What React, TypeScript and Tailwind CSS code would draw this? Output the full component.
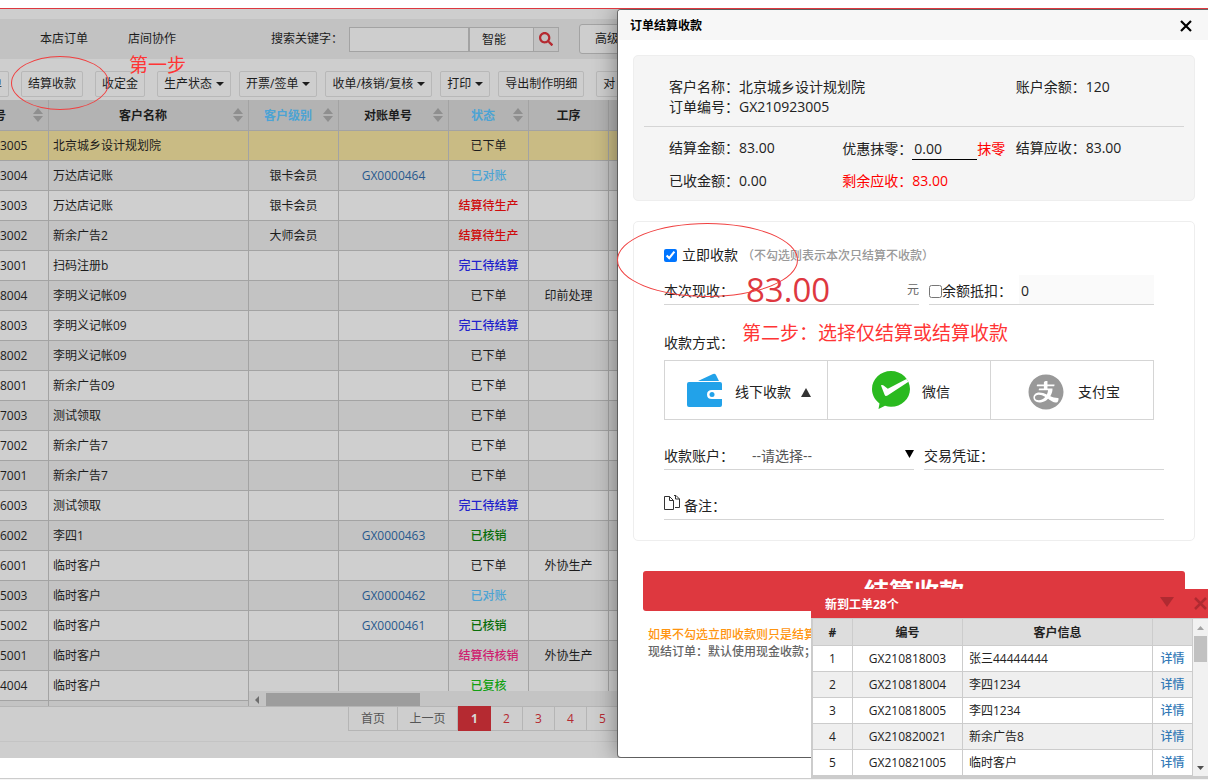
import type { ReactNode } from 'react';
import clsx from 'clsx';
import { FaSearch } from 'react-icons/fa';
import { AiFillAlipayCircle } from 'react-icons/ai';

type Order = {
  id: string;
  name: string;
  level?: string;
  bill?: string;
  status: string;
  step?: string;
};

const ORDERS: Order[] = [
  { id: '3005', name: '北京城乡设计规划院', status: '已下单' },
  { id: '3004', name: '万达店记账', level: '银卡会员', bill: 'GX0000464', status: '已对账' },
  { id: '3003', name: '万达店记账', level: '银卡会员', status: '结算待生产' },
  { id: '3002', name: '新余广告2', level: '大师会员', status: '结算待生产' },
  { id: '3001', name: '扫码注册b', status: '完工待结算' },
  { id: '8004', name: '李明义记帐09', status: '已下单', step: '印前处理' },
  { id: '8003', name: '李明义记帐09', status: '完工待结算' },
  { id: '8002', name: '李明义记帐09', status: '已下单' },
  { id: '8001', name: '新余广告09', status: '已下单' },
  { id: '7003', name: '测试领取', status: '已下单' },
  { id: '7002', name: '新余广告7', status: '已下单' },
  { id: '7001', name: '新余广告7', status: '已下单' },
  { id: '6003', name: '测试领取', status: '完工待结算' },
  { id: '6002', name: '李四1', bill: 'GX0000463', status: '已核销' },
  { id: '6001', name: '临时客户', status: '已下单', step: '外协生产' },
  { id: '5003', name: '临时客户', bill: 'GX0000462', status: '已对账' },
  { id: '5002', name: '临时客户', bill: 'GX0000461', status: '已核销' },
  { id: '5001', name: '临时客户', status: '结算待核销', step: '外协生产' },
  { id: '4004', name: '临时客户', status: '已复核' },
];

const STATUS_COLORS: Record<string, string> = {
  已下单: 'text-[#1c1c1c]',
  已对账: 'font-medium text-[#4da3d4]',
  结算待生产: 'font-medium text-[#cf0d0d]',
  完工待结算: 'font-medium text-[#2222cc]',
  已核销: 'font-medium text-[#0a6e0a]',
  结算待核销: 'font-medium text-[#cf2270]',
  已复核: 'font-medium text-[#13a013]',
};

const TICKETS = [
  { no: 'GX210818003', customer: '张三44444444' },
  { no: 'GX210818004', customer: '李四1234' },
  { no: 'GX210818005', customer: '李四1234' },
  { no: 'GX210820021', customer: '新余广告8' },
  { no: 'GX210821005', customer: '临时客户' },
];

const TOOLS = [
  { label: '单' },
  { label: '结算收款' },
  { label: '收定金' },
  { label: '生产状态', menu: true },
  { label: '开票/签单', menu: true },
  { label: '收单/核销/复核', menu: true },
  { label: '打印', menu: true },
  { label: '导出制作明细' },
  { label: '对' },
];

function Caret() {
  return (
    <svg viewBox="0 0 8 4" className="ml-1 h-1 w-2 shrink-0 fill-current">
      <path d="M0 0h8L4 4z" />
    </svg>
  );
}

function SortIcon() {
  return (
    <svg viewBox="0 0 10 14" className="h-3.5 w-2.5 shrink-0 fill-[#8f8f8f]">
      <path d="M5 0l5 6H0zM0 8h10l-5 6z" />
    </svg>
  );
}

function HeadCell({ children, sort = true, blue }: { children?: ReactNode; sort?: boolean; blue?: boolean }) {
  return (
    <th className="h-[31px] border-r border-b border-[#a3a3a3] bg-[#b3b3b3] p-0 font-bold">
      <div className={clsx('flex items-center', sort && 'pr-[5px] pl-1', blue && 'text-[#4da3d4]')}>
        <span className="flex-1 pt-0.5 text-center">{children}</span>
        {sort && <SortIcon />}
      </div>
    </th>
  );
}

function Cell({ children, className }: { children?: ReactNode; className?: string }) {
  return (
    <td className={clsx('h-[30px] border-r border-b border-[#a3a3a3] p-0 whitespace-nowrap', className)}>
      {children}
    </td>
  );
}

function rowColor(i: number) {
  if (i === 0) return 'bg-[#c9bb84]';
  return i % 2 ? 'bg-[#c3c3c3]' : 'bg-[#cfcfcf]';
}

function OrderTables() {
  return (
    <div className="flex min-h-0 flex-1 overflow-hidden border-b border-[#b5b5b5]">
      {/* frozen columns */}
      <div className="w-[249px] shrink-0 overflow-hidden">
        <table className="w-full table-fixed border-separate border-spacing-0">
          <colgroup>
            <col className="w-[49px]" />
            <col />
          </colgroup>
          <thead>
            <tr>
              <th className="h-[31px] border-r border-b border-[#a3a3a3] bg-[#b3b3b3] p-0 font-bold">
                <div className="-ml-1.5 flex items-center justify-between pr-[5px]">
                  <span className="pt-0.5">号</span>
                  <SortIcon />
                </div>
              </th>
              <HeadCell>客户名称</HeadCell>
            </tr>
          </thead>
          <tbody>
            {ORDERS.map((o, i) => (
              <tr key={o.id} className={rowColor(i)}>
                <Cell>{o.id}</Cell>
                <Cell className="pl-1">{o.name}</Cell>
              </tr>
            ))}
            <tr className="bg-[#c3c3c3]">
              <Cell />
              <Cell />
            </tr>
          </tbody>
        </table>
      </div>

      {/* scrolling columns */}
      <div className="flex min-w-0 flex-1 flex-col">
        <div className="min-h-0 flex-1 overflow-hidden">
          <table className="w-full table-fixed border-separate border-spacing-0 text-center">
            <colgroup>
              <col className="w-[90px]" />
              <col className="w-[110px]" />
              <col className="w-[80px]" />
              <col className="w-[80px]" />
              <col />
            </colgroup>
            <thead>
              <tr>
                <HeadCell blue>客户级别</HeadCell>
                <HeadCell>对账单号</HeadCell>
                <HeadCell blue>状态</HeadCell>
                <HeadCell sort={false}>工序</HeadCell>
                <HeadCell sort={false} />
              </tr>
            </thead>
            <tbody>
              {ORDERS.map((o, i) => (
                <tr key={o.id} className={rowColor(i)}>
                  <Cell>{o.level}</Cell>
                  <Cell>
                    {o.bill && (
                      <a href="#" className="text-[#29598c]">
                        {o.bill}
                      </a>
                    )}
                  </Cell>
                  <Cell className={STATUS_COLORS[o.status]}>{o.status}</Cell>
                  <Cell>{o.step}</Cell>
                  <Cell />
                </tr>
              ))}
            </tbody>
          </table>
        </div>
        <div className="flex h-[15px] shrink-0 items-end bg-[#c4c4c4]">
          <svg viewBox="0 0 17 15" className="h-[15px] w-[17px] fill-[#6e6e6e]">
            <path d="M10 5v8L6 9z" />
          </svg>
          <div className="h-[13px] w-[154px] bg-[#9d9d9d]" />
        </div>
      </div>
    </div>
  );
}

function Pager() {
  const item = 'h-6 border-r border-b border-[#b5b5b5] leading-6';
  return (
    <div className="h-[51px] shrink-0">
      <nav className="flex h-[35px] border-b border-[#c4c4c4] pl-[348px] text-[#b52a31]">
        <button className={clsx(item, 'w-[50px] border-l text-[#555]')}>首页</button>
        <button className={clsx(item, 'w-[60px] text-[#555]')}>上一页</button>
        <button className="-mt-px h-[25px] w-[33px] bg-[#b52a31] font-bold text-[#d8d8d8]">1</button>
        {['2', '3', '4', '5'].map((n) => (
          <button key={n} className={clsx(item, 'w-8 font-medium')}>
            {n}
          </button>
        ))}
      </nav>
    </div>
  );
}

function OrdersPage() {
  return (
    <div className="flex h-full flex-col bg-[#cecece] pt-2.5 text-xs text-[#1c1c1c]">
      <div className="flex h-10 shrink-0 items-center bg-[#c2c2c2] pl-10">
        <a href="#" className="w-[88px]">
          本店订单
        </a>
        <a href="#" className="w-[143px]">
          店间协作
        </a>
        <label htmlFor="keyword" className="w-[78px]">
          搜索关键字：
        </label>
        <input id="keyword" className="h-[25px] w-[120px] border border-[#a3a3a3] bg-[#cecece] px-1 outline-none" />
        <select
          aria-label="搜索方式"
          className="h-[25px] w-16 appearance-none border-y border-l border-[#a3a3a3] bg-[#cecece] pt-0.5 pl-3 outline-none"
        >
          <option>智能</option>
        </select>
        <button aria-label="搜索" className="flex h-[25px] w-[26px] items-center justify-center border border-[#a3a3a3]">
          <FaSearch className="size-3.5 text-[#b52a31]" />
        </button>
        <button className="ml-5 h-[30px] rounded-[3px] border border-[#a3a3a3] bg-[#cecece] px-[15px]">高级</button>
      </div>

      <div className="-ml-[17px] flex h-[41px] shrink-0 items-start pt-3">
        {TOOLS.map((tool) => (
          <button
            key={tool.label}
            className={clsx(
              'flex h-[26px] shrink-0 items-center rounded-xs border border-[#b8b8b8] px-1.5',
              tool.menu ? 'mr-2' : 'mr-3',
            )}
          >
            {tool.label}
            {tool.menu && <Caret />}
          </button>
        ))}
      </div>

      <OrderTables />
      <Pager />
    </div>
  );
}

function WalletIcon() {
  return (
    <svg viewBox="0 0 35 34" className="h-[34px] w-[35px] fill-[#22a2e9]">
      <path d="M11 8L26 1q2-1 3 1l3 6z" />
      <path d="M2 9h31q2 0 2 2v6h-10q-5 0-5 4.500t5 4.500h10v6q0 2-2 2H2q-2 0-2-2V11q0-2 2-2z" />
      <circle cx="25" cy="21.500" r="2.500" />
    </svg>
  );
}

function WechatPayIcon() {
  return (
    <svg viewBox="0 0 38 38" className="size-[38px]">
      <path
        d="M19 0C8.500 0 0 8 0 18c0 6 3 11 7.500 14.500L6.500 38l6.500-3.200c2 .7 4 1 6 1 10.500 0 19-8 19-17.800S29.500 0 19 0z"
        fill="#2aba1f"
      />
      <path d="M9 14.500c.8-.8 2-.4 2.600 0l4.200 3.300L34.500 8l2 2.800L15.500 24.500c-1.200.8-2.300.7-2.900-.8z" fill="#fff" />
    </svg>
  );
}

function CopyIcon() {
  return (
    <svg viewBox="0 0 16 16" className="mb-1 size-4 shrink-0" fill="none" stroke="#333">
      <path d="M.5 1.500h5l4 4v9H.5zM5.500 1.500v4h4" />
      <path d="M10 .5h2l3.500 3.500v8.500H11M11.500 .5v3.500h4" />
    </svg>
  );
}

function Field({ label, children, className }: { label: string; children: ReactNode; className?: string }) {
  return (
    <div className={className}>
      {label}：{children}
    </div>
  );
}

function SettleDialog() {
  const line = 'flex h-[30px] items-center border-b border-[#d5d5d5]';
  return (
    <section
      role="dialog"
      aria-label="订单结算收款"
      className="absolute inset-y-px right-0 w-[590px] rounded-l-[3px] bg-white text-sm text-[#222] shadow-[0_0_24px_rgba(0,0,0,0.45),0_0_0_1px_#777]"
    >
      <header className="flex h-[30px] items-center justify-between rounded-tl-[3px] bg-[#f7f7f7] pr-4 pl-3">
        <h2 className="pt-0.5 text-xs font-bold text-black">订单结算收款</h2>
        <button aria-label="关闭" className="pt-0.5">
          <svg viewBox="0 0 12 12" className="size-3" stroke="#000" strokeWidth="2.200">
            <path d="M1 1l10 10M11 1L1 11" />
          </svg>
        </button>
      </header>

      <div className="pt-[15px] pr-[13px] pl-[15px]">
        <div className="rounded-[5px] border border-[#eee] bg-[#f5f5f5] pt-[21px] pb-[3px]">
          <div className="grid grid-cols-3 pr-[5px] pl-[35px] leading-5">
            <Field label="客户名称" className="col-span-2">
              北京城乡设计规划院
            </Field>
            <Field label="账户余额">120</Field>
            <Field label="订单编号">GX210923005</Field>
          </div>
          <hr className="mx-2.5 mt-[9px] mb-1 border-[#d5d5d5]" />
          <div className="grid grid-cols-3 pr-[5px] pl-[35px] leading-[33px]">
            <Field label="结算金额">83.00</Field>
            <div className="flex h-[33px] items-center pt-0.5 whitespace-nowrap">
              <label htmlFor="discount">优惠抹零：</label>
              <input
                id="discount"
                defaultValue="0.00"
                className="h-[22px] w-[65px] border-b border-black pl-0.5 outline-none"
              />
              <button className="text-[#f00]">抹零</button>
            </div>
            <Field label="结算应收">83.00</Field>
            <Field label="已收金额">0.00</Field>
            <Field label="剩余应收" className="text-[#f00]">
              83.00
            </Field>
          </div>
        </div>

        <div className="mt-5 rounded-[5px] border border-[#eee] px-[30px] pt-[23px] pb-5">
          <div className="flex h-5 items-center gap-1">
            <label className="flex items-center gap-[5px]">
              <input type="checkbox" defaultChecked className="size-[13px]" />
              立即收款
            </label>
            <span className="pt-0.5 text-xs font-medium text-[#999]">（不勾选则表示本次只结算不收款）</span>
          </div>

          <div className="mt-2.5 flex gap-2.5">
            <div className={clsx(line, 'w-[255px]')}>
              <label htmlFor="cash" className="w-[82px] shrink-0 pt-0.5">
                本次现收：
              </label>
              <input
                id="cash"
                defaultValue="83.00"
                className="h-[29px] min-w-0 flex-1 text-[33px] leading-[29px] text-[#de383f] outline-none"
              />
              <span className="text-xs text-[#666]">元</span>
            </div>
            <div className={clsx(line, 'w-[225px]')}>
              <input id="use-balance" type="checkbox" className="mt-1 size-[13px]" />
              <label htmlFor="use-balance" className="w-[77px] pt-0.5">
                余额抵扣：
              </label>
              <input
                aria-label="余额抵扣"
                defaultValue="0"
                className="h-[29px] min-w-0 flex-1 bg-[#fafafa] pt-0.5 pl-0.5 outline-none"
              />
            </div>
          </div>

          <div className="mt-7 h-5 leading-5">收款方式：</div>
          <div className="mt-[7px] mr-2.5 grid h-15 grid-cols-[163px_163px_1fr] divide-x divide-[#d5d5d5] border border-[#d5d5d5]">
            <button className="flex items-center pl-[22px]">
              <WalletIcon />
              <span className="ml-[13px] pt-1">线下收款</span>
              <svg viewBox="0 0 10 9" className="mt-1 ml-2.5 h-[9px] w-2.5 fill-[#333]">
                <path d="M5 0l5 9H0z" />
              </svg>
            </button>
            <button className="flex items-center gap-3 pl-11">
              <WechatPayIcon />
              <span className="pt-1">微信</span>
            </button>
            <button className="flex items-center gap-3 pl-[35px]">
              <AiFillAlipayCircle className="mt-1 size-10 text-[#999]" />
              <span className="pt-1">支付宝</span>
            </button>
          </div>

          <div className="mt-5 flex gap-2.5">
            <div className={clsx(line, 'relative w-[250px]')}>
              <label htmlFor="account" className="w-[88px] shrink-0 pt-0.5">
                收款账户：
              </label>
              <select id="account" className="h-[29px] min-w-0 flex-1 appearance-none pt-0.5 text-[#555] outline-none">
                <option>--请选择--</option>
              </select>
              <svg viewBox="0 0 9 8" className="pointer-events-none absolute top-2.5 right-0 h-2 w-[9px]">
                <path d="M0 0h9L4.500 8z" />
              </svg>
            </div>
            <div className={clsx(line, 'flex-1')}>
              <label htmlFor="voucher" className="pt-0.5">
                交易凭证：
              </label>
              <input id="voucher" className="h-[29px] min-w-0 flex-1 outline-none" />
            </div>
          </div>

          <div className={clsx(line, 'mt-5 gap-1')}>
            <CopyIcon />
            <label htmlFor="remark" className="pt-0.5">
              备注：
            </label>
            <input id="remark" className="h-[29px] min-w-0 flex-1 outline-none" />
          </div>
        </div>

        <div className="px-2.5 pt-[30px]">
          <button className="h-10 w-full rounded-[3px] bg-[#de383f] text-[25px] leading-10 font-bold text-white">
            结算收款
          </button>
        </div>
        <div className="pt-[15px] pl-[15px] text-xs leading-[17px] font-medium text-[#666]">
          <p className="text-[#ff9510]">如果不勾选立即收款则只是结算</p>
          <p>现结订单：默认使用现金收款；</p>
        </div>
      </div>
    </section>
  );
}

function TicketPopup() {
  const th = 'h-[27px] border-r border-b border-[#ccc] bg-[#ddd] p-0 pt-0.5 font-bold';
  const td = 'h-[26px] border-r border-b border-[#ccc] p-0';
  return (
    <aside className="absolute right-0 bottom-0.5 flex h-[189px] w-[397px] flex-col text-xs text-[#222]">
      <header className="flex h-[29px] shrink-0 items-center bg-[#de383f] pr-px pl-3.5">
        <h3 className="flex-1 pt-0.5 font-bold text-white">新到工单28个</h3>
        <button aria-label="收起">
          <svg viewBox="0 0 14 10" className="mb-1 h-2.5 w-3.5 fill-[#b02a31]">
            <path d="M0 0h14L7 10z" />
          </svg>
        </button>
        <button aria-label="关闭" className="ml-5">
          <svg viewBox="0 0 13 13" className="size-[13px]" stroke="#b02a31" strokeWidth="2.500">
            <path d="M1 1l11 11M12 1L1 12" />
          </svg>
        </button>
      </header>
      <div className="flex min-h-0 flex-1 overflow-hidden border-t border-b-2 border-l-2 border-[#ccc] bg-white">
        <table className="h-max flex-1 table-fixed border-separate border-spacing-0 text-center">
          <colgroup>
            <col className="w-10" />
            <col className="w-[110px]" />
            <col />
            <col className="w-10" />
          </colgroup>
          <thead>
            <tr>
              <th className={th}>#</th>
              <th className={th}>编号</th>
              <th className={th}>客户信息</th>
              <th className={th} />
            </tr>
          </thead>
          <tbody>
            {TICKETS.map((t, i) => (
              <tr key={t.no} className={i % 2 ? 'bg-[#efefef]' : 'bg-white'}>
                <td className={td}>{i + 1}</td>
                <td className={td}>{t.no}</td>
                <td className={clsx(td, 'pl-1.5 text-left')}>{t.customer}</td>
                <td className={td}>
                  <a href="#" className="font-medium text-[#337ab7]">
                    详情
                  </a>
                </td>
              </tr>
            ))}
          </tbody>
        </table>
        <div className="flex w-[15px] shrink-0 flex-col items-center justify-between bg-[#f1f1f1]">
          <div className="flex flex-col items-center">
            <svg viewBox="0 0 15 17" className="h-[17px] w-[15px] fill-[#a3a3a3]">
              <path d="M4 11h7L7.500 7z" />
            </svg>
            <div className="h-[26px] w-[13px] bg-[#c1c1c1]" />
          </div>
          <svg viewBox="0 0 15 17" className="h-[17px] w-[15px] fill-[#505050]">
            <path d="M4 7h7l-3.500 4z" />
          </svg>
        </div>
      </div>
    </aside>
  );
}

/** Red pen marks of the tutorial, drawn over the page. */
function Annotations() {
  return (
    <div className="pointer-events-none absolute inset-0 text-[19px] leading-6 whitespace-nowrap text-[#ff3535]">
      <div className="absolute top-14 left-[11px] h-[54px] w-[98px] rounded-[50%] border border-[#f04040]" />
      <p className="absolute top-[53px] left-[129px]">第一步</p>
      <div className="absolute top-[223px] right-[410px] h-[74px] w-[181px] rounded-[50%] border border-[#f04040]" />
      <p className="absolute top-[321px] right-[200px]">第二步：选择仅结算或结算收款</p>
    </div>
  );
}

export default function App() {
  return (
    <div className="relative flex h-screen flex-col overflow-hidden bg-white pt-2 font-['Open_Sans','Noto_Sans_CJK_SC',sans-serif]">
      <main className="relative min-h-0 flex-1 border-t border-[#de383f]">
        <div className="relative h-full overflow-hidden">
          <OrdersPage />
          <SettleDialog />
        </div>
      </main>
      <footer className="mt-5 h-0.5 shrink-0 border-t border-[#ccc] bg-[#f5f5f5]" />
      <TicketPopup />
      <Annotations />
    </div>
  );
}
